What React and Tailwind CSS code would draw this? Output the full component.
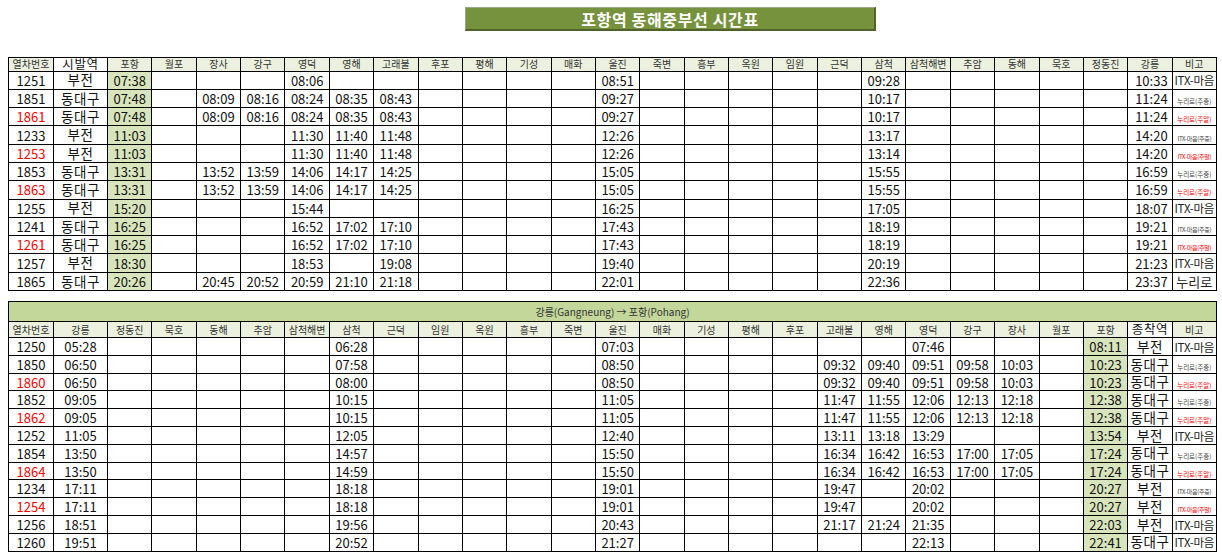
import React from 'react';

const FONT = { fontFamily: '"Noto Sans CJK KR", "Noto Sans", sans-serif' };

const downCols = ['포항', '월포', '장사', '강구', '영덕', '영해', '고래불', '후포', '평해', '기성', '매화', '울진', '죽변', '흥부', '옥원', '임원', '근덕', '삼척', '삼척해변', '추암', '동해', '묵호', '정동진', '강릉'];
const upCols = ['정동진', '묵호', '동해', '추암', '삼척해변', '삼척', '근덕', '임원', '옥원', '흥부', '죽변', '울진', '매화', '기성', '평해', '후포', '고래불', '영해', '영덕', '강구', '장사', '월포', '포항'];

// note kinds: 'itx' big, 'nuri' big, 'n-wd' 누리로(주중), 'n-we' 누리로(주말), 'i-wd', 'i-we'
const down = [
  { no: '1251', from: '부전', t: { 포항: '07:38', 영덕: '08:06', 울진: '08:51', 삼척: '09:28', 강릉: '10:33' }, note: 'itx' },
  { no: '1851', from: '동대구', t: { 포항: '07:48', 장사: '08:09', 강구: '08:16', 영덕: '08:24', 영해: '08:35', 고래불: '08:43', 울진: '09:27', 삼척: '10:17', 강릉: '11:24' }, note: 'n-wd' },
  { no: '1861', red: true, from: '동대구', t: { 포항: '07:48', 장사: '08:09', 강구: '08:16', 영덕: '08:24', 영해: '08:35', 고래불: '08:43', 울진: '09:27', 삼척: '10:17', 강릉: '11:24' }, note: 'n-we' },
  { no: '1233', from: '부전', t: { 포항: '11:03', 영덕: '11:30', 영해: '11:40', 고래불: '11:48', 울진: '12:26', 삼척: '13:17', 강릉: '14:20' }, note: 'i-wd' },
  { no: '1253', red: true, from: '부전', t: { 포항: '11:03', 영덕: '11:30', 영해: '11:40', 고래불: '11:48', 울진: '12:26', 삼척: '13:14', 강릉: '14:20' }, note: 'i-we' },
  { no: '1853', from: '동대구', t: { 포항: '13:31', 장사: '13:52', 강구: '13:59', 영덕: '14:06', 영해: '14:17', 고래불: '14:25', 울진: '15:05', 삼척: '15:55', 강릉: '16:59' }, note: 'n-wd' },
  { no: '1863', red: true, from: '동대구', t: { 포항: '13:31', 장사: '13:52', 강구: '13:59', 영덕: '14:06', 영해: '14:17', 고래불: '14:25', 울진: '15:05', 삼척: '15:55', 강릉: '16:59' }, note: 'n-we' },
  { no: '1255', from: '부전', t: { 포항: '15:20', 영덕: '15:44', 울진: '16:25', 삼척: '17:05', 강릉: '18:07' }, note: 'itx' },
  { no: '1241', from: '동대구', t: { 포항: '16:25', 영덕: '16:52', 영해: '17:02', 고래불: '17:10', 울진: '17:43', 삼척: '18:19', 강릉: '19:21' }, note: 'i-wd' },
  { no: '1261', red: true, from: '동대구', t: { 포항: '16:25', 영덕: '16:52', 영해: '17:02', 고래불: '17:10', 울진: '17:43', 삼척: '18:19', 강릉: '19:21' }, note: 'i-we' },
  { no: '1257', from: '부전', t: { 포항: '18:30', 영덕: '18:53', 고래불: '19:08', 울진: '19:40', 삼척: '20:19', 강릉: '21:23' }, note: 'itx' },
  { no: '1865', from: '동대구', t: { 포항: '20:26', 장사: '20:45', 강구: '20:52', 영덕: '20:59', 영해: '21:10', 고래불: '21:18', 울진: '22:01', 삼척: '22:36', 강릉: '23:37' }, note: 'nuri' },
];

const up = [
  { no: '1250', dep: '05:28', to: '부전', t: { 삼척: '06:28', 울진: '07:03', 영덕: '07:46', 포항: '08:11' }, note: 'itx' },
  { no: '1850', dep: '06:50', to: '동대구', t: { 삼척: '07:58', 울진: '08:50', 고래불: '09:32', 영해: '09:40', 영덕: '09:51', 강구: '09:58', 장사: '10:03', 포항: '10:23' }, note: 'n-wd' },
  { no: '1860', red: true, dep: '06:50', to: '동대구', t: { 삼척: '08:00', 울진: '08:50', 고래불: '09:32', 영해: '09:40', 영덕: '09:51', 강구: '09:58', 장사: '10:03', 포항: '10:23' }, note: 'n-we' },
  { no: '1852', dep: '09:05', to: '동대구', t: { 삼척: '10:15', 울진: '11:05', 고래불: '11:47', 영해: '11:55', 영덕: '12:06', 강구: '12:13', 장사: '12:18', 포항: '12:38' }, note: 'n-wd' },
  { no: '1862', red: true, dep: '09:05', to: '동대구', t: { 삼척: '10:15', 울진: '11:05', 고래불: '11:47', 영해: '11:55', 영덕: '12:06', 강구: '12:13', 장사: '12:18', 포항: '12:38' }, note: 'n-we' },
  { no: '1252', dep: '11:05', to: '부전', t: { 삼척: '12:05', 울진: '12:40', 고래불: '13:11', 영해: '13:18', 영덕: '13:29', 포항: '13:54' }, note: 'itx' },
  { no: '1854', dep: '13:50', to: '동대구', t: { 삼척: '14:57', 울진: '15:50', 고래불: '16:34', 영해: '16:42', 영덕: '16:53', 강구: '17:00', 장사: '17:05', 포항: '17:24' }, note: 'n-wd' },
  { no: '1864', red: true, dep: '13:50', to: '동대구', t: { 삼척: '14:59', 울진: '15:50', 고래불: '16:34', 영해: '16:42', 영덕: '16:53', 강구: '17:00', 장사: '17:05', 포항: '17:24' }, note: 'n-we' },
  { no: '1234', dep: '17:11', to: '부전', t: { 삼척: '18:18', 울진: '19:01', 고래불: '19:47', 영덕: '20:02', 포항: '20:27' }, note: 'i-wd' },
  { no: '1254', red: true, dep: '17:11', to: '부전', t: { 삼척: '18:18', 울진: '19:01', 고래불: '19:47', 영덕: '20:02', 포항: '20:27' }, note: 'i-we' },
  { no: '1256', dep: '18:51', to: '부전', t: { 삼척: '19:56', 울진: '20:43', 고래불: '21:17', 영해: '21:24', 영덕: '21:35', 포항: '22:03' }, note: 'itx' },
  { no: '1260', dep: '19:51', to: '동대구', t: { 삼척: '20:52', 울진: '21:27', 영덕: '22:13', 포항: '22:41' }, note: 'itx' },
];

function Note({ kind }) {
  if (kind === 'itx') return <span className="text-[11.5px] text-[#222] tracking-tight">ITX-마음</span>;
  if (kind === 'nuri') return <span className="text-[13px] text-[#222]">누리로</span>;
  const label = {
    'n-wd': '누리로(주중)',
    'n-we': '누리로(주말)',
    'i-wd': 'ITX-마음(주중)',
    'i-we': 'ITX-마음(주말)',
  }[kind];
  const red = kind.endsWith('we');
  const size = kind.startsWith('n') ? 'text-[6.5px]' : 'text-[6px] tracking-tighter';
  return <span className={`${size} ${red ? 'text-[#ff0000]' : 'text-[#444]'}`}>{label}</span>;
}

function Colgroup({ n }) {
  return (
    <colgroup>
      <col className="w-[45px]" />
      <col className="w-[54px]" />
      {Array.from({ length: n }).map((_, i) => (
        <col key={i} />
      ))}
    </colgroup>
  );
}

const cell = 'border border-black p-0 text-center whitespace-nowrap';
const head = 'border border-black p-0 text-center whitespace-nowrap text-[10px] leading-none text-[#333] bg-[#ebf1de] font-normal';
const green = 'bg-[#d8e4bc]';

export default function App() {
  return (
    <div className="w-[1222px] h-[559px] bg-white text-[#111] overflow-hidden" style={FONT}>
      <div className="ml-[465px] mt-[7px] w-[411px] h-[24px] bg-[#76923c] border border-[#9aa88a] border-r-2 border-b-2 border-r-[#4f6228] border-b-[#4f6228] flex items-center justify-center">
        <span className="text-white font-bold text-[16px] leading-none tracking-[0.04em]">포항역 동해중부선 시간표</span>
      </div>

      <table className="ml-[8px] mt-[26px] w-[1209px] table-fixed border-collapse">
        <Colgroup n={25} />
        <thead>
          <tr className="h-[13px]">
            <th className={head}>열차번호</th>
            <th className={`${head} !bg-white !text-[12.5px] !text-[#111] tracking-[0.05em]`}>시발역</th>
            {downCols.map((c) => (
              <th key={c} className={`${head} ${c === '포항' ? green : ''}`}>{c}</th>
            ))}
            <th className={head}>비고</th>
          </tr>
        </thead>
        <tbody>
          {down.map((r) => (
            <tr key={r.no} className="h-[18.3px] text-[13px] leading-none">
              <td className={`${cell} ${r.red ? 'text-[#ff0000]' : ''}`}>{r.no}</td>
              <td className={`${cell} text-[13.5px] tracking-[0.04em]`}>{r.from}</td>
              {downCols.map((c) => (
                <td key={c} className={`${cell} ${c === '포항' ? green : ''} ${c === '강릉' ? 'text-right pr-[4px]' : ''}`}>{r.t[c] || ''}</td>
              ))}
              <td className={cell}><Note kind={r.note} /></td>
            </tr>
          ))}
        </tbody>
      </table>

      <table className="ml-[8px] mt-[10px] w-[1209px] table-fixed border-collapse">
        <Colgroup n={25} />
        <thead>
          <tr className="h-[20px]">
            <th colSpan={27} className="border border-black p-0 bg-[#c4d79b] text-[10px] font-normal leading-none text-[#333] text-center">
              강릉(Gangneung) → 포항(Pohang)
            </th>
          </tr>
          <tr className="h-[16px]">
            <th className={head}>열차번호</th>
            <th className={head}>강릉</th>
            {upCols.map((c) => (
              <th key={c} className={`${head} ${c === '포항' ? green : ''}`}>{c}</th>
            ))}
            <th className={`${head} !bg-white !text-[12.5px] !text-[#111] tracking-[0.05em]`}>종착역</th>
            <th className={head}>비고</th>
          </tr>
        </thead>
        <tbody>
          {up.map((r) => (
            <tr key={r.no} className="h-[17.8px] text-[13px] leading-none">
              <td className={`${cell} ${r.red ? 'text-[#ff0000]' : ''}`}>{r.no}</td>
              <td className={cell}>{r.dep}</td>
              {upCols.map((c) => (
                <td key={c} className={`${cell} ${c === '포항' ? green : ''}`}>{r.t[c] || ''}</td>
              ))}
              <td className={`${cell} text-[13.5px] tracking-[0.04em]`}>{r.to}</td>
              <td className={cell}><Note kind={r.note} /></td>
            </tr>
          ))}
        </tbody>
      </table>
    </div>
  );
}
